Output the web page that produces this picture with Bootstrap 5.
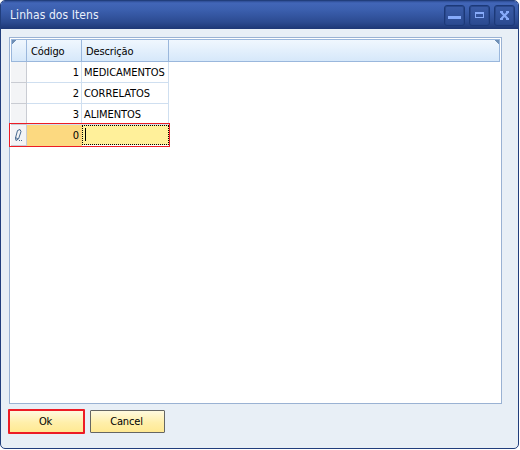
<!DOCTYPE html>
<html lang="pt-BR">
<head>
<meta charset="utf-8">
<title>Linhas dos Itens</title>
<link href="https://cdn.jsdelivr.net/npm/bootstrap@5.3.0/dist/css/bootstrap.min.css" rel="stylesheet">
<style>
body{background:#fff;font:11px/13px "DejaVu Sans Condensed","DejaVu Sans",sans-serif;font-stretch:condensed;color:#000;overflow:hidden}
.win{width:519px;height:449px;background:#e8eff6;border:1px solid #213e7c;border-radius:5px;overflow:hidden}
.titlebar{height:28px;padding:0 3px 0 9px;background:linear-gradient(#2d4c94 0,#4266b8 2px,#3b5fae 9px,#2c4b91 21px,#1d3775 28px);color:#e9f0fc;font-size:12px}
.tools{gap:4px}
.tool{width:21px;height:21px;border:1px solid #1c3978;border-radius:3px;background:linear-gradient(#3a5ca8,#2b4a90);box-shadow:inset 0 0 0 1px #29488d}
.content-area{padding:8px 0 0 8px}
.grid-box{width:493px;height:367px;border:1px solid #9ab2d3;background:#fff;padding:1px}
.grid-head{height:23px;border:1px solid #9ab7dc;background:linear-gradient(#f0f7fe,#d6e8fa)}
.grid-head>div{border-right:1px solid #9ab7dc}
.grid-head>div:last-of-type{border-right:0}
.c0{width:16px;flex:none}
.c1{width:55px;flex:none}
.c2{width:87px;flex:none}
.grid-head .c0{width:15px}
.grid-head .c1,.grid-head .c2{padding-left:4px;padding-top:1px}
.line{height:21px}
.line>div{border-right:1px solid #cfdff0;border-bottom:1px solid #cfdff0}
.line .c0{background:#f3f4f6;border-color:#c9ccd3}
.line .c1{padding-right:2px}
.line .c2{padding-left:3px}
.editing .c1{background:#fcd980;border-color:#fcd980}
.editing .c2{background:#fff09a;border:1px dotted #000;height:20px;padding:0 0 1px 2px}
.marker{left:-2px;top:-2px;width:161px;height:24px;border:1px solid #ed1c24}
.caret{width:1px;height:13px;background:#000}
.corner{width:5px;height:5px;top:0}
.corner-l{left:0;background:linear-gradient(135deg,#6f8fb5 40%,transparent 50%)}
.corner-r{right:0;background:linear-gradient(225deg,#6f8fb5 40%,transparent 50%)}
.actions{padding-top:5px;gap:5px;margin-left:-1px}
.cmd{width:75px;height:23px;border:1px solid #656663;border-radius:1px;background:linear-gradient(#fffadf,#ffefaa 55%,#ffe993);font-size:11px;line-height:13px;color:#000;padding:0 2px 0 0;margin-top:1px}
.cmd:first-child{width:77px;height:25px;border:2px solid #ed1c24;margin-top:0}
.t{white-space:nowrap;letter-spacing:-.15px}
.t-title{letter-spacing:.08px}
.t-name{margin-left:-1px;letter-spacing:-.05px}
</style>
<script src="https://cdn.jsdelivr.net/npm/bootstrap@5.3.0/dist/js/bootstrap.bundle.min.js"></script>
</head>
<body>
<main class="win">
 <header class="titlebar d-flex align-items-center justify-content-between">
  <span class="t t-title">Linhas dos Itens</span>
  <div class="tools d-flex">
   <div class="tool"><svg class="d-block" width="19" height="19" shape-rendering="crispEdges"><path fill="#87abfa" d="M3 10h13v3H3z"/></svg></div>
   <div class="tool"><svg class="d-block" width="19" height="19" shape-rendering="crispEdges"><path fill="#87abfa" fill-rule="evenodd" d="M5 6h9v6H5zM6 8v3h7V8z"/></svg></div>
   <div class="tool"><svg class="d-block" width="19" height="19"><path stroke="#87abfa" stroke-width="2.2" d="M6.500 6.500l6 6M12.500 6.500l-6 6"/><path fill="#87abfa" d="M5 5h3v2H5zM11 5h3v2h-3zM5 12h3v2H5zM11 12h3v2h-3z"/></svg></div>
  </div>
 </header>
 <div class="content-area">
  <section class="grid-box">
   <div class="grid-head d-flex align-items-stretch position-relative">
    <div class="c0"></div>
    <div class="c1 d-flex align-items-center"><span class="t">Código</span></div>
    <div class="c2 d-flex align-items-center"><span class="t">Descrição</span></div>
    <div class="flex-grow-1"></div>
    <i class="corner corner-l position-absolute"></i><i class="corner corner-r position-absolute"></i>
   </div>
   <div class="line d-flex"><div class="c0"></div><div class="c1 d-flex align-items-center justify-content-end">1</div><div class="c2 d-flex align-items-center"><span class="t t-name">MEDICAMENTOS</span></div></div>
   <div class="line d-flex"><div class="c0"></div><div class="c1 d-flex align-items-center justify-content-end">2</div><div class="c2 d-flex align-items-center"><span class="t t-name">CORRELATOS</span></div></div>
   <div class="line d-flex"><div class="c0"></div><div class="c1 d-flex align-items-center justify-content-end">3</div><div class="c2 d-flex align-items-center"><span class="t t-name">ALIMENTOS</span></div></div>
   <div class="line editing d-flex position-relative">
    <div class="c0"><svg class="d-block" width="15" height="20" fill="none" stroke="#46688f"><path d="M6.500 5.500L9 4.500L10 6.500L7.500 14L5 15.500L4.500 13zM4.500 12.500L7 14"/><path stroke-dasharray="1 1" d="M8 15.500h4"/></svg></div>
    <div class="c1 d-flex align-items-center justify-content-end">0</div><div class="c2 d-flex align-items-center"><span class="caret"></span></div>
    <span class="marker position-absolute"></span>
   </div>
  </section>
  <footer class="actions d-flex">
   <button type="button" class="btn cmd"><span class="t">Ok</span></button>
   <button type="button" class="btn cmd"><span class="t">Cancel</span></button>
  </footer>
 </div>
</main>
</body>
</html>
